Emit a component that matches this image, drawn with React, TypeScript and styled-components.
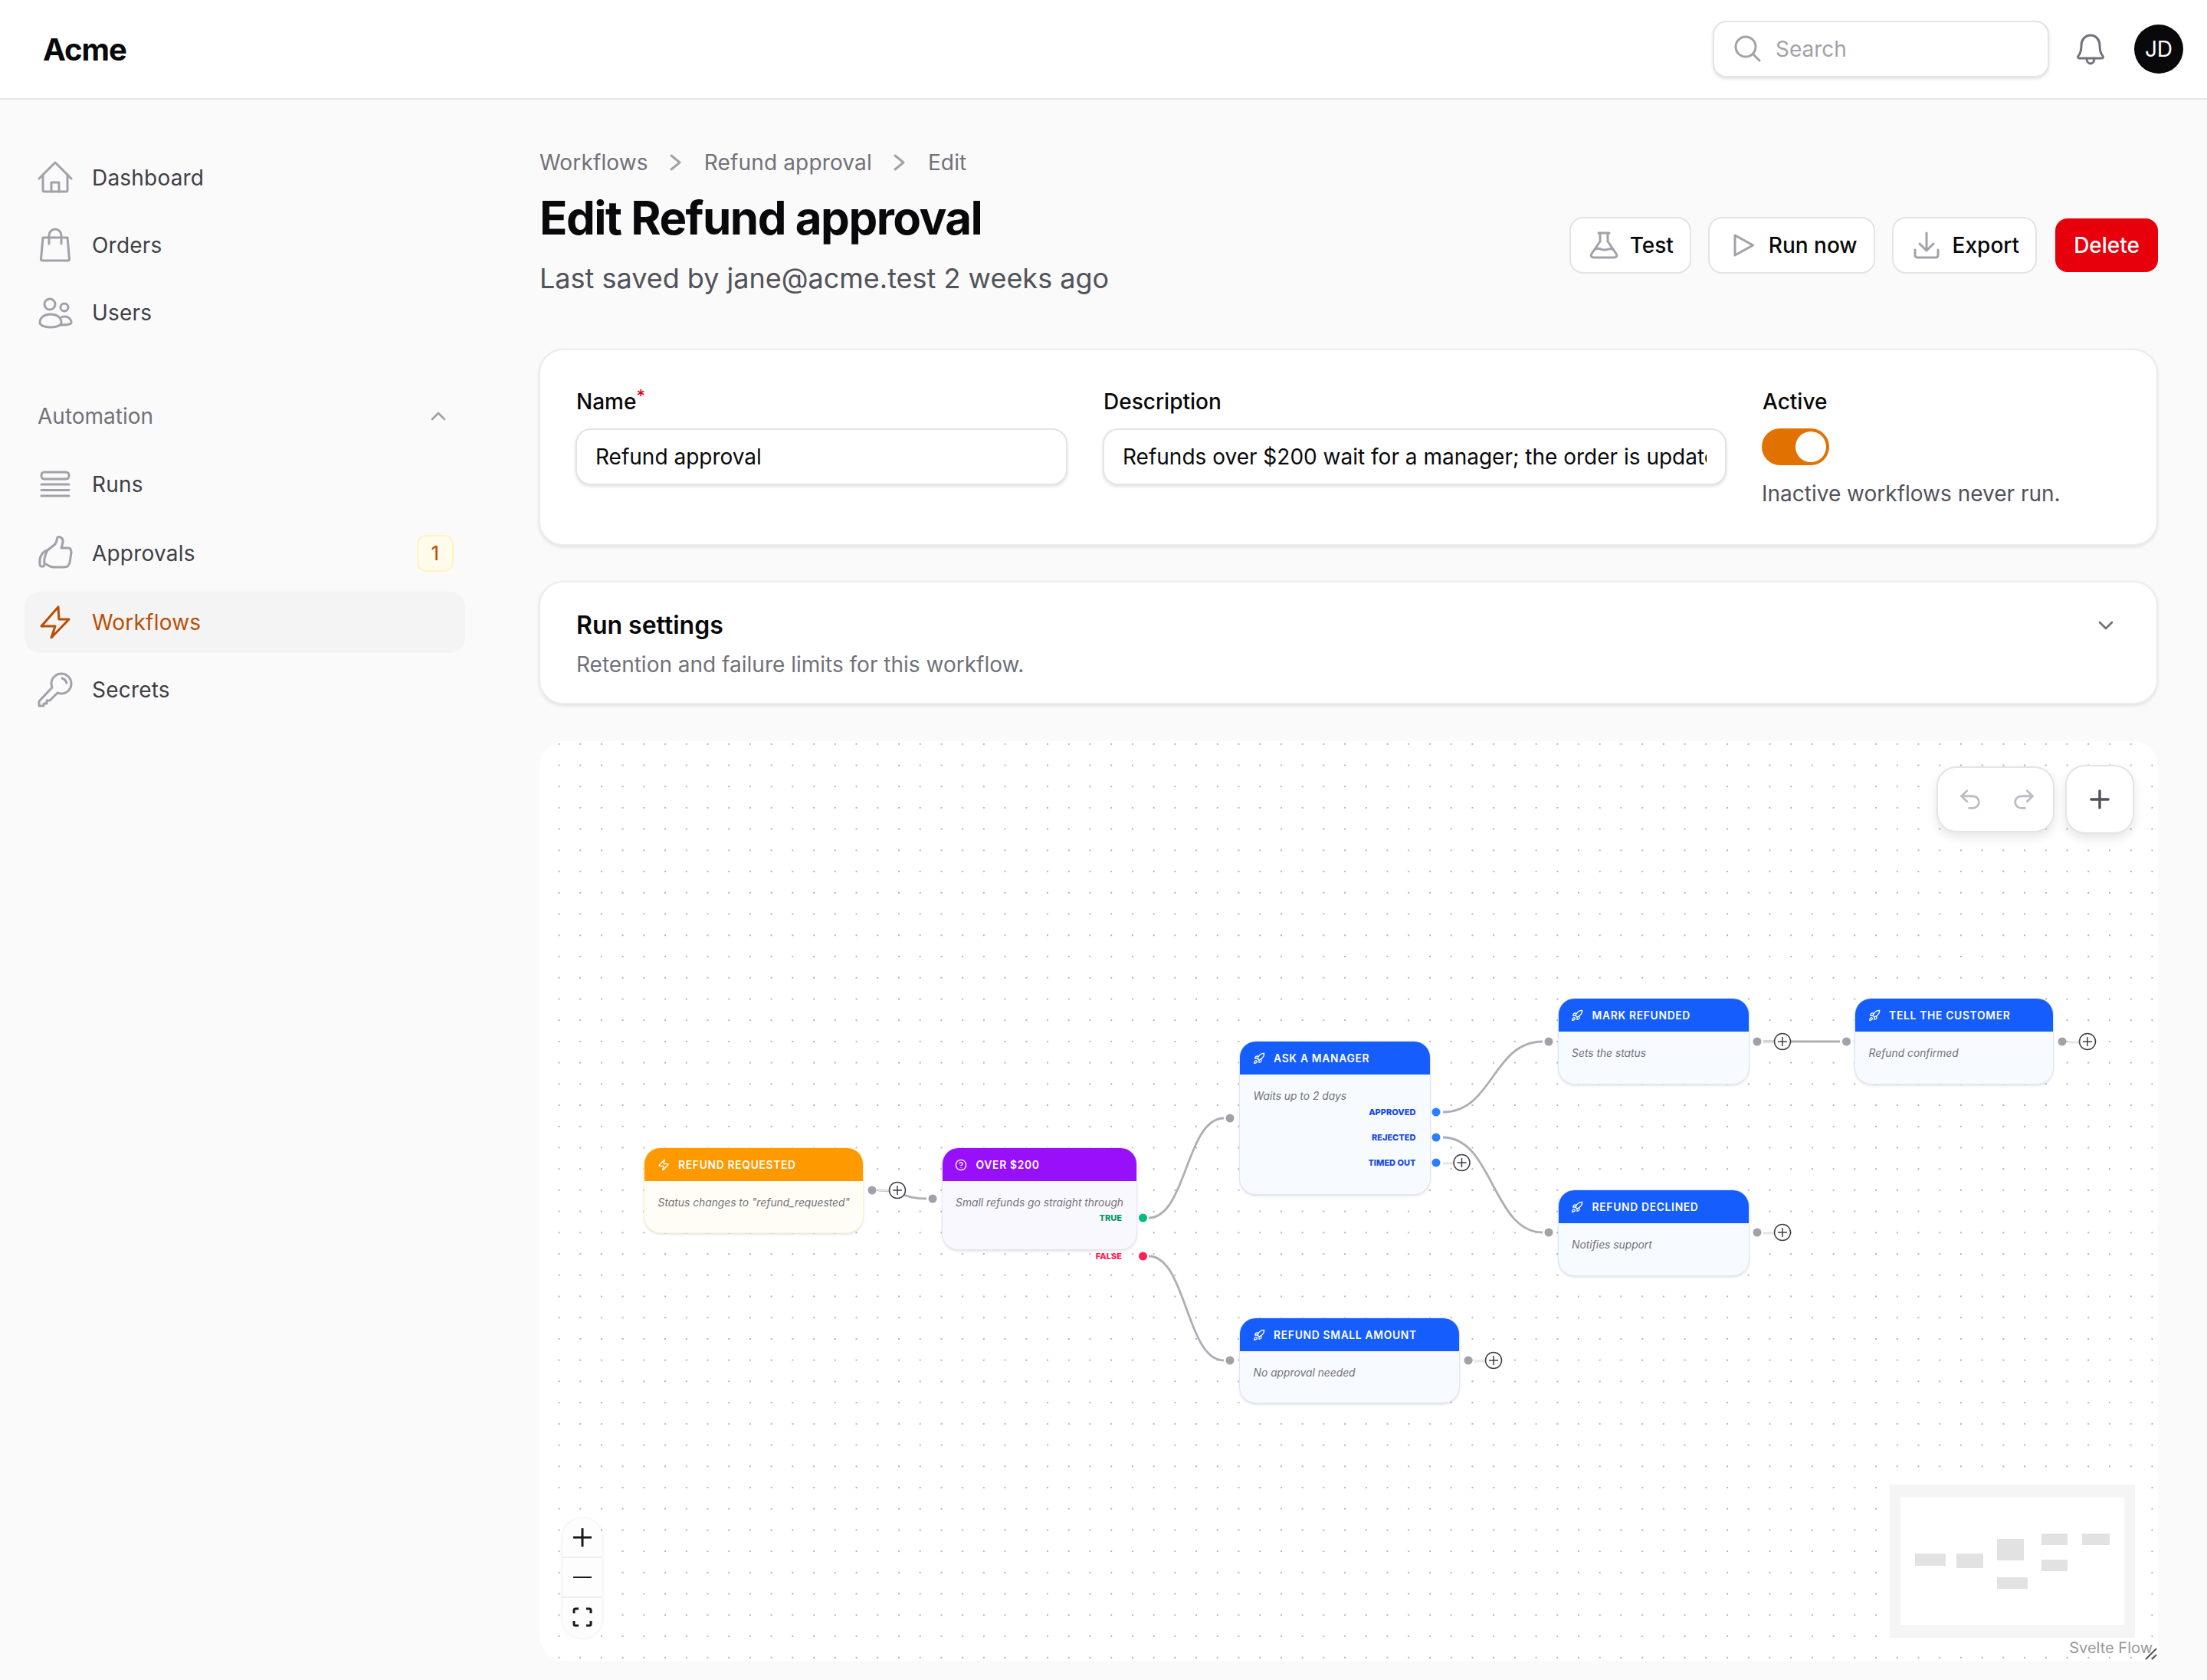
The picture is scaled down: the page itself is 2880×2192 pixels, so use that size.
import React from "react";
import styled, { createGlobalStyle } from "styled-components";
import { ChevronDown, ChevronUp, CircleHelp, Plus, Redo2, Rocket, Undo2, Zap } from "lucide-react";

const GlobalStyle = createGlobalStyle`
  html, body {
    margin: 0;
    background: #fafafa;
  }
  body {
    font-family: Inter, "Noto Sans", sans-serif;
    color: #09090b;
  }
  * {
    box-sizing: border-box;
  }
`;

const Page = styled.div`
  width: 2880px;
  min-height: 2192px;
`;

const Topbar = styled.header`
  height: 130px;
  padding: 0 31px 0 56px;
  display: flex;
  align-items: center;
  gap: 36px;
  background: #fff;
  border-bottom: 2px solid #e4e4e7;
`;

const Brand = styled.div`
  font-size: 40px;
  font-weight: 700;
  letter-spacing: -1px;
  color: #09090b;
  margin-right: auto;
`;

const SearchBox = styled.label`
  width: 439px;
  height: 74px;
  padding: 0 26px;
  display: flex;
  align-items: center;
  gap: 16px;
  color: #a1a1aa;
  background: #fff;
  border: 2px solid #e4e4e7;
  border-radius: 18px;
  box-shadow: 0 2px 4px rgba(0, 0, 0, 0.12);
`;

const SearchInput = styled.input`
  flex: 1;
  min-width: 0;
  border: none;
  outline: none;
  background: none;
  font: inherit;
  font-size: 28px;

  &::placeholder {
    color: #a1a1aa;
  }
`;

const BellWrap = styled.span`
  display: flex;
  margin-left: -2px;
  color: #71717a;
`;

const Avatar = styled.div`
  width: 64px;
  height: 64px;
  margin-left: 1px;
  border-radius: 50%;
  display: flex;
  align-items: center;
  justify-content: center;
  background: #09090b;
  color: #fff;
  font-size: 28px;
`;

const Glyph = styled.svg<{ $w?: number; $h?: number }>`
  width: ${(p) => p.$w ?? 48}px;
  height: ${(p) => p.$h ?? 48}px;
  flex: none;
  overflow: visible;
  fill: none;
  stroke: currentColor;
  stroke-width: 3;
  stroke-linecap: round;
  stroke-linejoin: round;
`;

const Shell = styled.div`
  display: flex;
  align-items: flex-start;
`;

const Sidebar = styled.nav`
  width: 640px;
  flex: none;
  padding: 62px 33px 0 32px;
  display: flex;
  flex-direction: column;
  gap: 8px;
`;

const NavItem = styled.a<{ $active?: boolean }>`
  min-height: 80px;
  padding: 16px 15px 16px 16px;
  display: flex;
  align-items: center;
  gap: 24px;
  font-size: 28px;
  line-height: 44px;
  letter-spacing: 0.2px;
  border-radius: 20px;
  color: ${(p) => (p.$active ? "#bb4d00" : "#3f3f46")};
  background: ${(p) => (p.$active ? "#f4f4f5" : "transparent")};

  svg {
    color: ${(p) => (p.$active ? "#bb4d00" : "#a1a1aa")};
  }
`;

const NavLabel = styled.span`
  flex: 1;
`;

const NavBadge = styled.span`
  width: 48px;
  height: 48px;
  margin: 2px 0;
  display: flex;
  align-items: center;
  justify-content: center;
  font-size: 26px;
  color: #bb4d00;
  background: #fffbeb;
  border: 2px solid #fef3c6;
  border-radius: 12px;
`;

const NavGroup = styled.div`
  height: 48px;
  margin: 63px 0 17px;
  padding: 0 19px 0 17px;
  display: flex;
  align-items: center;
  justify-content: space-between;
  font-size: 28px;
  color: #71717a;

  svg {
    color: #a1a1aa;
  }
`;

const Main = styled.main`
  flex: 1;
  min-width: 0;
  padding: 60px 64px 24px;
`;

const Heading = styled.div`
  display: flex;
  align-items: flex-end;
  justify-content: space-between;
`;

const Crumbs = styled.div`
  height: 44px;
  display: flex;
  align-items: center;
  gap: 28.5px;
  font-size: 28px;
  letter-spacing: 0.15px;
  color: #71717a;

  svg {
    color: #a1a1aa;
  }
`;

const Title = styled.h1`
  margin: 14px 0 19px;
  font-size: 60px;
  line-height: 72px;
  font-weight: 700;
  letter-spacing: -1.5px;
  color: #09090b;
`;

const Subtitle = styled.p`
  margin: 0;
  font-size: 36px;
  line-height: 48px;
  color: #52525b;
`;

const Actions = styled.div`
  display: flex;
  gap: 22px;
  margin-bottom: 30px;
`;

const Button = styled.button<{ $danger?: boolean }>`
  height: 74px;
  padding: ${(p) => (p.$danger ? "0 24px" : "0 21px 0 25px")};
  margin-right: ${(p) => (p.$danger ? -2 : 0)}px;
  display: flex;
  align-items: center;
  gap: 16px;
  font: inherit;
  font-size: 28px;
  font-weight: 500;
  background: ${(p) => (p.$danger ? "#e7000b" : "#fff")};
  background-clip: padding-box;
  color: ${(p) => (p.$danger ? "#fff" : "#09090b")};
  border: 2px solid ${(p) => (p.$danger ? "transparent" : "#e4e4e7")};
  border-radius: 18px;

  svg {
    color: #a1a1aa;
  }
`;

const Card = styled.section`
  margin-left: -1px;
  background: #fff;
  border: 2px solid #ececee;
  border-radius: 32px;
  box-shadow: 0 2px 4px rgba(0, 0, 0, 0.1);
`;

const FormCard = styled(Card)`
  margin-top: 68px;
  padding: 45px 45px 46px 46px;
  display: grid;
  grid-template-columns: 642px 814px 1fr;
  column-gap: 46px;
`;

const Field = styled.div`
  min-width: 0;
`;

const Label = styled.div`
  height: 44px;
  margin-bottom: 13px;
  padding-left: 1px;
  font-size: 28px;
  line-height: 44px;
  font-weight: 500;
  color: #09090b;
`;

const Required = styled.sup`
  font-size: 22px;
  line-height: 0;
  color: #e7000b;
`;

const TextInput = styled.input`
  width: 100%;
  height: 74px;
  padding: 0 24px;
  font: inherit;
  font-size: 28px;
  color: #09090b;
  background: #fff;
  border: 2px solid #e4e4e7;
  border-radius: 20px;
  outline: none;
  box-shadow: 0 2px 4px rgba(0, 0, 0, 0.12);
`;

const Toggle = styled.div`
  width: 88px;
  height: 48px;
  margin-top: 1px;
  padding: 4px;
  display: flex;
  justify-content: flex-end;
  background: #e17100;
  border-radius: 24px;
`;

const Knob = styled.div`
  width: 40px;
  height: 40px;
  border-radius: 50%;
  background: #fff;
`;

const Help = styled.p`
  margin: 17px 0 0;
  font-size: 28px;
  line-height: 40px;
  color: #52525b;
`;

const SettingsCard = styled(Card)`
  margin-top: 46px;
  padding: 32px 50px 30px 47px;
`;

const SettingsHead = styled.div`
  display: flex;
  align-items: center;
  justify-content: space-between;
  color: #71717a;
`;

const SettingsTitle = styled.h2`
  margin: 0;
  font-size: 32px;
  line-height: 48px;
  font-weight: 600;
  color: #09090b;
`;

const SettingsText = styled.p`
  margin: 7px 0 0;
  font-size: 28px;
  line-height: 40px;
  color: #71717a;
`;

const Canvas = styled.section`
  position: relative;
  height: 1200px;
  margin-top: 48px;
  overflow: hidden;
  border-radius: 32px 32px 8px 32px;
  background-color: #fff;
  background-image: radial-gradient(circle, #b4b4ba 1px, transparent 1.4px);
  background-size: 27.72px 27.72px;
  background-position: 11.64px -10.06px;
`;

const EdgeLayer = styled.svg`
  position: absolute;
  inset: 0;
  width: 100%;
  height: 100%;
`;

const tones = {
  amber: { head: "#fe9a00", body: "#fffdf6", line: "#fef3c6" },
  purple: { head: "#9810fa", body: "#faf8ff", line: "#e9e2f8" },
  blue: { head: "#155dfc", body: "#f7faff", line: "#dbe6f8" },
};

type Tone = keyof typeof tones;

const NodeBox = styled.article<{ $x: number; $y: number; $w: number; $h: number; $tone: Tone }>`
  position: absolute;
  left: ${(p) => p.$x}px;
  top: ${(p) => p.$y}px;
  width: ${(p) => p.$w}px;
  height: ${(p) => p.$h}px;
  background: ${(p) => tones[p.$tone].body};
  border: 1.4px solid ${(p) => tones[p.$tone].line};
  border-radius: 22px;
  box-shadow: 0 2px 3px rgba(0, 0, 0, 0.1);
`;

const NodeHead = styled.header<{ $tone: Tone }>`
  height: 42.6px;
  padding: 2px 16.6px 0;
  display: flex;
  align-items: center;
  gap: 11.5px;
  color: #fff;
  font-size: 13.8px;
  font-weight: 600;
  letter-spacing: 0.7px;
  text-transform: uppercase;
  white-space: nowrap;
  background: ${(p) => tones[p.$tone].head};
  border-radius: 20.6px 20.6px 0 0;
`;

const NodeText = styled.p`
  margin: 0;
  padding: 18px 0 0 17.6px;
  font-size: 13.8px;
  line-height: 20px;
  font-style: italic;
  white-space: nowrap;
  color: #71717a;
`;

const Port = styled.span<{ $top: number; $color: string }>`
  position: absolute;
  right: 18.6px;
  top: ${(p) => p.$top + 0.6}px;
  font-size: 11px;
  line-height: 16px;
  font-weight: 800;
  white-space: nowrap;
  color: ${(p) => p.$color};
`;

const TopControls = styled.div`
  position: absolute;
  top: 31px;
  right: 31px;
  display: flex;
  align-items: center;
  gap: 14px;
`;

const HistoryPanel = styled.div`
  width: 154px;
  height: 86px;
  display: flex;
  align-items: center;
  justify-content: space-between;
  padding: 0 21px 0 25px;
  color: #bdbdc4;
  background: #fff;
  border: 2px solid #e4e4e7;
  border-radius: 26px;
  box-shadow: 0 6px 14px rgba(0, 0, 0, 0.1);
`;

const AddButton = styled.div`
  width: 90px;
  height: 90px;
  display: flex;
  align-items: center;
  justify-content: center;
  color: #52525b;
  background: #fff;
  border: 2px solid #e4e4e7;
  border-radius: 26px;
  box-shadow: 0 6px 14px rgba(0, 0, 0, 0.1);
`;

const ZoomControls = styled.div`
  position: absolute;
  left: 30px;
  top: 1014px;
  width: 52px;
  display: flex;
  flex-direction: column;
  overflow: hidden;
  border-radius: 26px;
  box-shadow: 0 0 4px rgba(0, 0, 0, 0.1);
`;

const ZoomButton = styled.div`
  height: 52px;
  display: flex;
  align-items: center;
  justify-content: center;
  color: #18181b;
  background: #fdfdfd;

  &:not(:last-child) {
    border-bottom: 2px solid #eeeeee;
  }

  &:last-child {
    padding-bottom: 2px;
  }
`;

const Minimap = styled.svg`
  position: absolute;
  right: 30px;
  bottom: 30px;
  width: 320px;
  height: 200px;
`;

const Attribution = styled.div`
  position: absolute;
  right: 6px;
  bottom: 5px;
  padding: 0 1px;
  font-size: 20px;
  line-height: 24px;
  color: #999;
  background: rgba(255, 255, 255, 0.5);
`;

const ResizeMark = styled.svg`
  position: absolute;
  right: 1px;
  bottom: 1px;
  width: 16px;
  height: 16px;
`;

const navTop = [
  { label: "Dashboard", icon: "home" },
  { label: "Orders", icon: "bag" },
  { label: "Users", icon: "users" },
];

const navAutomation = [
  { label: "Runs", icon: "runs" },
  { label: "Approvals", icon: "thumb", badge: "1" },
  { label: "Workflows", icon: "bolt", active: true },
  { label: "Secrets", icon: "key" },
];

const NavIcon = ({ name }: { name: string }) => (
  <Glyph viewBox="0 0 48 48">
    {name === "home" && (
      <>
        <path d="M3 25 L24 4 L45 25" />
        <path d="M8 20 V40 a2 2 0 0 0 2 2 H38 a2 2 0 0 0 2 -2 V20" />
        <path d="M19 42 V30 H29 V42" />
      </>
    )}
    {name === "bag" && (
      <>
        <path d="M8 14 H40 L42.500 42 a2 2 0 0 1 -2 2 H7.500 a2 2 0 0 1 -2 -2 Z" />
        <path d="M16 22 V11 a8 8 0 0 1 16 0 V22" />
      </>
    )}
    {name === "users" && (
      <>
        <circle cx="17" cy="13" r="7" />
        <circle cx="36" cy="17" r="5" />
        <path d="M4 37 c0 -7 6 -11 14 -11 s14 4 14 11 c0 3 -5 6 -14 6 s-14 -3 -14 -6 Z" />
        <path d="M32 30 c1.500 -1 3 -1 5 -1 c5 0 8 4 8 8 c0 2 -5 3 -13 3" />
      </>
    )}
    {name === "runs" && (
      <>
        <rect x="6" y="8" width="36" height="9" rx="4" />
        <path d="M6 24 H42 M6 31.500 H42 M6 39 H42" />
      </>
    )}
    {name === "thumb" && (
      <>
        <path d="M14 20 L24 12 C26 9 26 6 27 3 C31 1 35 5 34 10 L32 17 H41 C44 17 45 20 45 23 L43 36 C42 40 40 42 36 42 H22 C18 42 15 40 12 38" />
        <path d="M14 20 C6 22 3 30 4 38 C4 42 9 42 10 39 C9 33 10 27 14 20" />
      </>
    )}
    {name === "bolt" && <path d="M28 4 L6 29 H24 L19 44 L42 20 H29 Z" />}
    {name === "key" && (
      <>
        <path d="M32 3 a13 13 0 0 1 0 26 c-2 0 -3.500 -.5 -5 -1 L17 38 h-4 v4 h-4 v3 H3 v-6 L20 21 c-.5 -1.500 -1 -3 -1 -5 a13 13 0 0 1 13 -13 Z" />
        <path d="M33 9 c3 1 5 3 6 6" />
      </>
    )}
  </Glyph>
);

const Chevron = () => (
  <Glyph $w={16} $h={24} viewBox="0 0 16 24">
    <path d="M2 3 L13 12 L2 21" />
  </Glyph>
);

const MainNav = ({ items }: { items: { label: string; icon: string; badge?: string; active?: boolean }[] }) => (
  <>
    {items.map((item) => (
      <NavItem key={item.label} $active={item.active}>
        <NavIcon name={item.icon} />
        <NavLabel>{item.label}</NavLabel>
        {item.badge && <NavBadge>{item.badge}</NavBadge>}
      </NavItem>
    ))}
  </>
);

const nodes = [
  { id: "trigger", tone: "amber" as Tone, x: 136, y: 530, w: 287, h: 112, title: "Refund requested", text: 'Status changes to "refund_requested"', icon: Zap },
  {
    id: "branch", tone: "purple" as Tone, x: 524.5, y: 530, w: 255, h: 134, title: "Over $200", text: "Small refunds go straight through", icon: CircleHelp,
    ports: [
      { label: "TRUE", top: 82, color: "#009966" },
      { label: "FALSE", top: 132, color: "#ff2056" },
    ],
  },
  {
    id: "ask", tone: "blue" as Tone, x: 913, y: 391, w: 250, h: 201, title: "Ask a manager", text: "Waits up to 2 days", icon: Rocket,
    ports: [
      { label: "APPROVED", top: 83, color: "#1447e6" },
      { label: "REJECTED", top: 116, color: "#1447e6" },
      { label: "TIMED OUT", top: 149, color: "#1447e6" },
    ],
  },
  { id: "mark", tone: "blue" as Tone, x: 1328.5, y: 335, w: 250, h: 113, title: "Mark refunded", text: "Sets the status", icon: Rocket },
  { id: "tell", tone: "blue" as Tone, x: 1716, y: 335, w: 260, h: 113, title: "Tell the customer", text: "Refund confirmed", icon: Rocket },
  { id: "declined", tone: "blue" as Tone, x: 1328.5, y: 585, w: 250, h: 113, title: "Refund declined", text: "Notifies support", icon: Rocket },
  { id: "small", tone: "blue" as Tone, x: 913, y: 752, w: 288, h: 112, title: "Refund small amount", text: "No approval needed", icon: Rocket },
];

// all of these are in page coordinates, the layer's viewBox maps them onto the canvas
const edges = [
  "M1146 1554 C1178 1554 1178 1565 1209 1565",
  "M1499 1590 C1548 1590 1548 1460 1597 1460",
  "M1499 1640 C1548 1640 1548 1776 1597 1776",
  "M1883 1452 C1948 1452 1948 1360 2013 1360",
  "M1883 1485 C1948 1485 1948 1609 2013 1609",
  "M2301 1360 L2401 1360",
];

const stubs = [
  "M1146 1554 H1161",
  "M1883 1519 H1898",
  "M2301 1361 H2316",
  "M2699 1361 H2714",
  "M2301 1610 H2316",
  "M1924 1777 H1939",
];

const handles = [
  { x: 1138, y: 1554, c: "#a1a1aa" },
  { x: 1217, y: 1565, c: "#a1a1aa" },
  { x: 1491.5, y: 1590, c: "#00bc7d" },
  { x: 1491.5, y: 1640, c: "#ff2056" },
  { x: 1605, y: 1460, c: "#a1a1aa" },
  { x: 1605, y: 1776, c: "#a1a1aa" },
  { x: 1874, y: 1452, c: "#2b7fff" },
  { x: 1874, y: 1485, c: "#2b7fff" },
  { x: 1874, y: 1518, c: "#2b7fff" },
  { x: 2021, y: 1360, c: "#a1a1aa" },
  { x: 2021, y: 1609, c: "#a1a1aa" },
  { x: 2293, y: 1360, c: "#a1a1aa" },
  { x: 2293, y: 1609, c: "#a1a1aa" },
  { x: 2409.5, y: 1360, c: "#a1a1aa" },
  { x: 2691, y: 1360, c: "#a1a1aa" },
  { x: 1916, y: 1776, c: "#a1a1aa" },
];

const adders = [
  { x: 1171, y: 1554 },
  { x: 1907.5, y: 1518 },
  { x: 2326, y: 1360 },
  { x: 2724, y: 1360 },
  { x: 2326, y: 1609 },
  { x: 1949, y: 1776 },
];

const miniNodes = [
  [33, 90, 40, 16],
  [87, 90, 35, 19],
  [140, 71, 35, 28],
  [198, 64, 34, 15],
  [251, 64, 36, 15],
  [198, 98, 34, 15],
  [140, 121, 40, 15],
];

const App: React.FC = () => (
  <Page>
    <GlobalStyle />
    <Topbar>
      <Brand>Acme</Brand>
      <SearchBox>
        <Glyph $w={36} $h={36} viewBox="0 0 36 36">
          <circle cx="15" cy="15" r="13" />
          <path d="M24.500 24.500 L33 33" />
        </Glyph>
        <SearchInput placeholder="Search" />
      </SearchBox>
      <BellWrap>
        <Glyph $w={40} $h={40} viewBox="0 0 40 40">
          <path d="M20 2 c-7 0 -12 6 -12 13 c0 7 -1 11 -4 14 c-1 1 0 3 1 3 h30 c1 0 2 -2 1 -3 c-3 -3 -4 -7 -4 -14 c0 -7 -5 -13 -12 -13 Z" />
          <path d="M15 32 c0 4 2 7 5 7 s5 -3 5 -7" />
        </Glyph>
      </BellWrap>
      <Avatar>JD</Avatar>
    </Topbar>
    <Shell>
      <Sidebar>
        <MainNav items={navTop} />
        <NavGroup>
          Automation
          <ChevronUp size={32} strokeWidth={2} />
        </NavGroup>
        <MainNav items={navAutomation} />
      </Sidebar>
      <Main>
        <Heading>
          <div>
            <Crumbs>
              <span>Workflows</span>
              <Chevron />
              <span>Refund approval</span>
              <Chevron />
              <span>Edit</span>
            </Crumbs>
            <Title>Edit Refund approval</Title>
            <Subtitle>Last saved by jane@acme.test 2 weeks ago</Subtitle>
          </div>
          <Actions>
            <Button>
              <Glyph $w={36} $h={36} viewBox="0 0 36 36">
                <path d="M11 2 H25 M13 2 V13 L2 29 C0 32 2 34 5 34 H31 C34 34 36 32 34 29 L23 13 V2" />
                <path d="M7 23 C12 20 15 25 20 24 S26 22 29 23" />
              </Glyph>
              Test
            </Button>
            <Button>
              <Glyph $w={36} $h={36} viewBox="0 0 36 36">
                <path d="M8 5 L31.500 18 L8 31 Z" />
              </Glyph>
              Run now
            </Button>
            <Button>
              <Glyph $w={36} $h={36} viewBox="0 0 36 36">
                <path d="M18 2 V24 M9 16 L18 25 L27 16" />
                <path d="M3 24 V31 a3 3 0 0 0 3 3 H30 a3 3 0 0 0 3 -3 V24" />
              </Glyph>
              Export
            </Button>
            <Button $danger>Delete</Button>
          </Actions>
        </Heading>

        <FormCard>
          <Field>
            <Label>
              Name<Required>*</Required>
            </Label>
            <TextInput readOnly value="Refund approval" />
          </Field>
          <Field>
            <Label>Description</Label>
            <TextInput readOnly value="Refunds over $200 wait for a manager; the order is updated when they answer" />
          </Field>
          <Field>
            <Label>Active</Label>
            <Toggle>
              <Knob />
            </Toggle>
            <Help>Inactive workflows never run.</Help>
          </Field>
        </FormCard>

        <SettingsCard>
          <SettingsHead>
            <SettingsTitle>Run settings</SettingsTitle>
            <ChevronDown size={32} strokeWidth={2} />
          </SettingsHead>
          <SettingsText>Retention and failure limits for this workflow.</SettingsText>
        </SettingsCard>

        <Canvas>
          <EdgeLayer viewBox="704 968 2112 1200" fill="none">
            {edges.map((d) => (
              <path key={d} d={d} stroke="#aeaeb5" strokeWidth="2.800" />
            ))}
            {stubs.map((d) => (
              <path key={d} d={d} stroke="#e4e4e7" strokeWidth="2.800" />
            ))}
            {handles.map((h) => (
              <circle key={`${h.x}-${h.y}`} cx={h.x} cy={h.y} r="5.500" fill={h.c} />
            ))}
            {adders.map((a) => (
              <g key={`${a.x}-${a.y}`} stroke="#3f3f46" strokeWidth="1.500">
                <circle cx={a.x} cy={a.y} r="10.500" fill="#fff" />
                <path d={`M${a.x - 6} ${a.y} H${a.x + 6} M${a.x} ${a.y - 6} V${a.y + 6}`} />
              </g>
            ))}
          </EdgeLayer>

          {nodes.map((n) => {
            const Icon = n.icon;
            return (
              <NodeBox key={n.id} $x={n.x} $y={n.y} $w={n.w} $h={n.h} $tone={n.tone}>
                <NodeHead $tone={n.tone}>
                  <Icon size={16} strokeWidth={2} />
                  {n.title}
                </NodeHead>
                <NodeText>{n.text}</NodeText>
                {n.ports?.map((p) => (
                  <Port key={p.label} $top={p.top} $color={p.color}>
                    {p.label}
                  </Port>
                ))}
              </NodeBox>
            );
          })}

          <TopControls>
            <HistoryPanel>
              <Undo2 size={34} strokeWidth={2} />
              <Redo2 size={34} strokeWidth={2} />
            </HistoryPanel>
            <AddButton>
              <Plus size={38} strokeWidth={2.200} />
            </AddButton>
          </TopControls>

          <ZoomControls>
            <ZoomButton>
              <Glyph $w={24} $h={24} viewBox="0 0 24 24">
                <path d="M0 12 H24 M12 0 V24" strokeLinecap="butt" />
              </Glyph>
            </ZoomButton>
            <ZoomButton>
              <Glyph $w={24} $h={24} viewBox="0 0 24 24">
                <path d="M0 12 H24" strokeWidth="2" strokeLinecap="butt" />
              </Glyph>
            </ZoomButton>
            <ZoomButton>
              <Glyph $w={24} $h={24} viewBox="0 0 24 24">
                <path d="M7 1 H3 a2 2 0 0 0 -2 2 V7 M17 1 H21 a2 2 0 0 1 2 2 V7 M7 23 H3 a2 2 0 0 1 -2 -2 V17 M17 23 H21 a2 2 0 0 0 2 -2 V17" strokeLinecap="butt" />
              </Glyph>
            </ZoomButton>
          </ZoomControls>

          <Minimap viewBox="0 0 320 200">
            <rect width="320" height="200" fill="#f5f5f5" />
            <rect x="14" y="17" width="292" height="166" fill="#fff" />
            {miniNodes.map(([x, y, w, h]) => (
              <rect key={`${x}-${y}`} x={x} y={y} width={w} height={h} fill="#e2e2e2" />
            ))}
          </Minimap>

          <Attribution>Svelte Flow</Attribution>
          <ResizeMark viewBox="0 0 16 16">
            <path d="M1 15 L15 1 M9 15 L15 9" stroke="#555" strokeWidth="2" />
          </ResizeMark>
        </Canvas>
      </Main>
    </Shell>
  </Page>
);

export default App;
